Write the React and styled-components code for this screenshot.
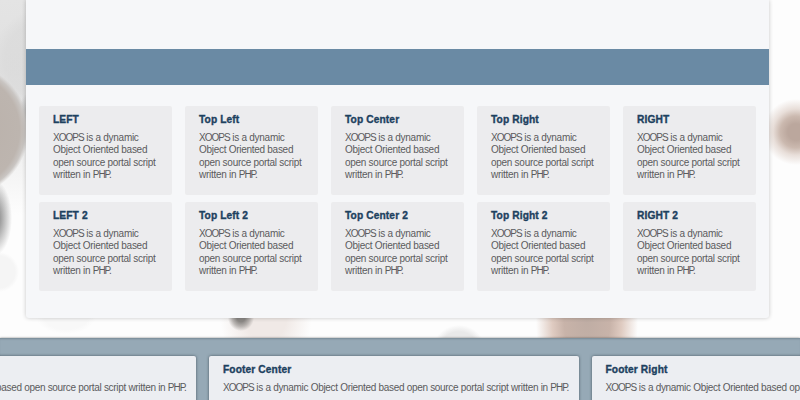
import React from "react";
import styled, { createGlobalStyle } from "styled-components";

const GlobalStyle = createGlobalStyle`
  * { box-sizing: border-box; }
  body {
    margin: 0;
    overflow: hidden;
    background: #fdfdfd;
    font-family: "Liberation Sans", Arial, sans-serif;
  }
`;

const Page = styled.div`
  width: 800px;
  height: 400px;
  overflow: hidden;
  display: flex;
  flex-direction: column;
  background:
    radial-gradient(circle 67px at -38px 130px, #b9b0a9 0, #bdb5af 86%, #c9c5c2 94%, rgba(205, 203, 201, 0) 100%),
    radial-gradient(ellipse 9px 20px at 28px 113px, rgba(130, 130, 130, 0.6), rgba(160, 160, 160, 0)),
    radial-gradient(ellipse 18px 38px at -6px 218px, #777 0, rgba(125, 125, 125, 0.75) 35%, rgba(180, 180, 180, 0) 100%),
    radial-gradient(circle 20px at -1px 272px, #f5f5f5 80%, rgba(245, 245, 245, 0)),
    radial-gradient(circle 52px at 44px 60px, rgba(218, 218, 218, 0.7) 75%, rgba(222, 222, 222, 0)),
    linear-gradient(#e4e4e4 0, #e0e0e0 70px, #ededed 140px, rgba(253, 253, 253, 0) 215px) 0 0 / 26px 215px no-repeat,
    radial-gradient(circle 13px at 241px 318px, #8b8885 30%, rgba(160, 156, 153, 0.7) 65%, rgba(210, 205, 202, 0)),
    radial-gradient(ellipse 46px 60px at 266px 315px, #f0e9e6 45%, rgba(250, 247, 245, 0)),
    radial-gradient(ellipse 30px 18px at 66px 316px, #f8f8f8 75%, rgba(248, 248, 248, 0)),
    radial-gradient(circle 27px at 459px 352px, #e9e9e9 75%, rgba(240, 240, 240, 0)),
    radial-gradient(ellipse 51px 100px at 587px 320px, #bfada4 0, #c8b3a9 45%, #dfcbc1 68%, rgba(250, 247, 245, 0)),
    radial-gradient(circle 33px at 796px 132px, #bba79d 25%, #cbb9af 48%, rgba(225, 212, 205, 0.75) 70%, rgba(250, 247, 245, 0)),
    #fdfdfd;
`;

const Panel = styled.main`
  flex: none;
  width: 743px;
  height: 318px;
  margin-left: 26px;
  border-radius: 0 0 3px 3px;
  background: #f6f7f9;
  box-shadow: 0 0 4px rgba(0, 0, 0, 0.22);
`;

const Band = styled.div`
  height: 36px;
  margin-top: 49px;
  background: #6a8aa4;
`;

const BlockGrid = styled.section`
  display: grid;
  grid-template-columns: repeat(5, 133px);
  grid-auto-rows: 89px;
  gap: 7px 13px;
  padding: 21px 13px 0;
`;

const Block = styled.article`
  padding: 8px 14px 0;
  border-radius: 2px;
  background: #ececee;
`;

const Title = styled.h2`
  margin: 0;
  font-size: 10.2px;
  line-height: 12px;
  font-weight: 700;
  letter-spacing: 0.12px;
  color: #1d415f;
  -webkit-text-stroke: 0.35px #1d415f;
  white-space: nowrap;
`;

const Copy = styled.p`
  margin: 6px 0 0;
  font-size: 10px;
  line-height: 12.3px;
  letter-spacing: -0.28px;
  color: #5b5b5d;
  white-space: nowrap;
`;

const Caps = styled.span`
  letter-spacing: -1px;
  margin-right: 0.3px;
`;

const Footer = styled.footer`
  flex: none;
  width: 800px;
  height: 62px;
  margin-top: 20px;
  padding-top: 18px;
  display: flex;
  gap: 13px;
  background: #96a9b6;
  box-shadow: 0 0 2px rgba(50, 50, 50, 0.6), inset 0 2px 2px -1px rgba(60, 75, 85, 0.35);
`;

const FooterBlock = styled.article`
  flex: none;
  width: 369.5px;
  height: 60px;
  padding: 8px 14px 0;
  border-radius: 2px;
  background: #eceef2;
  box-shadow: 0 0 3px rgba(35, 50, 60, 0.7);

  &:first-child {
    margin-left: -173.5px;
  }

  ${Copy} {
    letter-spacing: -0.31px;
  }
`;

const blocks = [
  "LEFT", "Top Left", "Top Center", "Top Right", "RIGHT",
  "LEFT 2", "Top Left 2", "Top Center 2", "Top Right 2", "RIGHT 2",
];

export default function App() {
  return (
    <>
      <GlobalStyle />
      <Page>
        <Panel>
          <Band />
          <BlockGrid>
            {blocks.map((title) => (
              <Block key={title}>
                <Title>{title}</Title>
                <Copy>
                  <Caps>XOOPS</Caps> is a dynamic<br />
                  Object Oriented based<br />
                  open source portal script<br />
                  written in <Caps>PHP.</Caps>
                </Copy>
              </Block>
            ))}
          </BlockGrid>
        </Panel>
        <Footer>
          {["Footer Left", "Footer Center", "Footer Right"].map((title) => (
            <FooterBlock key={title}>
              <Title>{title}</Title>
              <Copy>
                <Caps>XOOPS</Caps> is a dynamic Object Oriented based open source portal script written in <Caps>PHP.</Caps>
              </Copy>
            </FooterBlock>
          ))}
        </Footer>
      </Page>
    </>
  );
}
